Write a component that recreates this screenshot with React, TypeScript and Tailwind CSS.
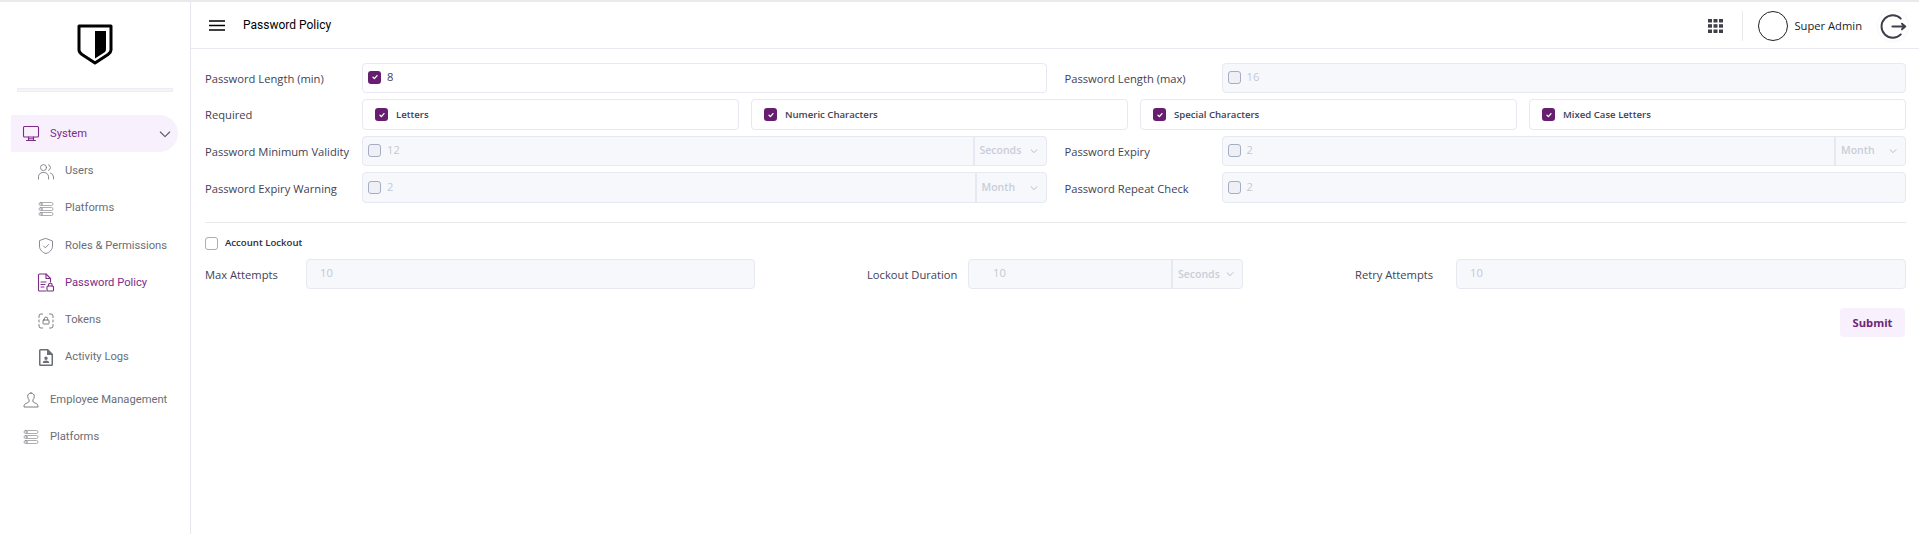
import type { ReactNode } from "react";

const stroke = {
  fill: "none",
  stroke: "currentColor",
  strokeLinecap: "round" as const,
  strokeLinejoin: "round" as const,
};

const MonitorIcon = () => (
  <svg width="20" height="20" viewBox="0 0 20 20" {...stroke} strokeWidth="1.1">
    <rect x="2.500" y="2.500" width="15" height="10.500" rx="1" />
    <path d="M7.500 13v3.500M12.500 13v3.500M5.500 16.500h9M7.500 14.800h5" />
  </svg>
);

const UsersIcon = () => (
  <svg width="18" height="18" viewBox="0 0 18 18" {...stroke} strokeWidth="0.8">
    <circle cx="6.500" cy="4.600" r="3" />
    <path d="M1.500 16v-2.200a4.300 4.300 0 0 1 4.300-4.300h1.400a4.300 4.300 0 0 1 4.300 4.300V16" />
    <path d="M11.500 1.800a3 3 0 0 1 0 5.600M13.500 10a4.200 4.200 0 0 1 3 4V16" />
  </svg>
);

const PlatformsIcon = () => (
  <svg width="16" height="16" viewBox="0 0 16 16" {...stroke} strokeWidth="0.7" className="opacity-80">
    <rect x="1" y="1.500" width="14" height="3" rx="1.500" />
    <rect x="1" y="6.500" width="14" height="3" rx="1.500" />
    <rect x="1" y="11.500" width="14" height="3" rx="1.500" />
    <circle cx="3.500" cy="3" r="0.800" />
    <circle cx="3.500" cy="8" r="0.800" />
    <circle cx="3.500" cy="13" r="0.800" />
  </svg>
);

const ShieldIcon = () => (
  <svg width="18" height="18" viewBox="0 0 18 18" {...stroke} strokeWidth="0.8">
    <path d="M9 1.500 15.500 4v5c0 3.800-2.800 6.400-6.500 7.500C5.300 15.400 2.500 12.800 2.500 9V4z" />
    <path d="m6.500 9 1.800 1.800 3.300-3.300" />
  </svg>
);

const PolicyIcon = () => (
  <svg width="18" height="20" viewBox="0 0 18 20" {...stroke} strokeWidth="1.1">
    <path d="M9 18H2.500a1 1 0 0 1-1-1V2a1 1 0 0 1 1-1h6.500l4.500 4.500V9" />
    <path d="M9 1v4.500h4.500M4 9h5M4 11.500h4M4 14h3" />
    <rect x="10" y="13" width="6.500" height="5" rx="1" />
    <path d="M11.500 13v-1a1.800 1.800 0 0 1 3.600 0v1" />
  </svg>
);

const TokenIcon = () => (
  <svg width="16" height="16" viewBox="0 0 16 16" {...stroke} strokeWidth="0.9">
    <path d="M1 4.500V3a2 2 0 0 1 2-2h1.500M11.500 1H13a2 2 0 0 1 2 2v1.500M15 11.500V13a2 2 0 0 1-2 2h-1.500M4.500 15H3a2 2 0 0 1-2-2v-1.500M1 7v2M15 7v2" />
    <rect x="5" y="7" width="6" height="4" rx="0.600" />
    <path d="M6.300 7V5.800a1.700 1.700 0 0 1 3.400 0V7" />
  </svg>
);

const LogsIcon = () => (
  <svg width="14" height="17" viewBox="0 0 14 17">
    <path
      fillRule="evenodd"
      fill="currentColor"
      d="M1.500 0H9l5 5v10.500a1.500 1.500 0 0 1-1.500 1.500h-11A1.500 1.500 0 0 1 0 15.500v-14A1.500 1.500 0 0 1 1.500 0ZM1.500 1.500v14h11V6H8V1.500ZM7 7.500a1.700 1.700 0 1 1 0 3.400 1.700 1.700 0 0 1 0-3.400ZM3.800 14c0-1.600 1.500-2.400 3.200-2.400s3.200.8 3.200 2.400Z"
    />
  </svg>
);

const PersonIcon = () => (
  <svg width="16" height="16" viewBox="0 0 16 16" {...stroke} strokeWidth="0.9">
    <path d="M8 1c-2 0-3.300 1.400-3.300 3.400 0 1.500.6 2.700 1.400 3.500v1.300c0 .7-.5 1-1.300 1.400L2.300 11.800C1.400 12.300 1 13.100 1 15h14c0-1.900-.4-2.700-1.300-3.200l-2.500-1.200c-.8-.4-1.300-.7-1.300-1.400V7.900c.8-.8 1.400-2 1.400-3.500C11.300 2.400 10 1 8 1Z" />
  </svg>
);

const Chevron = ({ className, width = "1.200" }: { className: string; width?: string }) => (
  <svg className={className} viewBox="0 0 12 12" {...stroke} strokeWidth={width}>
    <path d="m2.500 4.500 3.500 3.500 3.500-3.500" />
  </svg>
);

const Check = ({ checked, disabled }: { checked?: boolean; disabled?: boolean }) =>
  checked ? (
    <span className="flex h-[13px] w-[13px] shrink-0 items-center justify-center rounded-[3px] bg-[#651f6e]">
      <svg width="8" height="8" viewBox="0 0 8 8" {...stroke} stroke="#ffffff" strokeWidth="1.300">
        <path d="m2 4.200 1.400 1.400L6 2.600" />
      </svg>
    </span>
  ) : (
    <span
      className={`h-[13px] w-[13px] shrink-0 rounded-[3px] border border-[#a5adc0] ${disabled ? "bg-[#eef0f6]" : "bg-white"}`}
    />
  );

const Suffix = ({ label, wide }: { label: string; wide?: boolean }) => (
  <div
    className={`flex shrink-0 items-center justify-between border-l-2 border-[#e6e9f2] pl-[5px] pr-[7px] text-[10.500px] font-semibold text-[#c9cdd8] ${wide ? "w-[73px]" : "w-[71px]"}`}
  >
    <span>{label}</span>
    <Chevron className="h-[10px] w-[10px] text-[#b8bdc9]" />
  </div>
);

const Box = ({
  value,
  suffix,
  wide,
  className = "h-[30px]",
}: {
  value: string;
  suffix?: string;
  wide?: boolean;
  className?: string;
}) => (
  <div className={`flex items-stretch rounded-[4px] border border-[#e6e9f2] bg-[#f7f8fc] ${className}`}>
    <div className="flex min-w-0 flex-1 items-center gap-[6px] pb-px pl-[5px] text-[11.200px] text-[#c4c8d3]">
      <Check disabled />
      <span>{value}</span>
    </div>
    {suffix && <Suffix label={suffix} wide={wide} />}
  </div>
);

const Plain = ({ value, pad, suffix }: { value: string; pad: string; suffix?: boolean }) => (
  <div className="flex h-[30px] items-stretch rounded-[4px] border border-[#e6e9f2] bg-[#f7f8fc]">
    <div className={`flex flex-1 items-center pb-[2px] text-[11.200px] text-[#c4c8d3] ${pad}`}>{value}</div>
    {suffix && <Suffix label="Seconds" />}
  </div>
);

const Label = ({ children, className = "" }: { children: ReactNode; className?: string }) => (
  <label className={`text-[11.200px] leading-none text-[#3f4254] ${className}`}>{children}</label>
);

const Row = ({ label, children }: { label: string; children: ReactNode }) => (
  <div className="grid grid-cols-[157px_1fr] items-center">
    <Label className="pt-[2px]">{label}</Label>
    {children}
  </div>
);

const Required = ({ label }: { label: string }) => (
  <div className="flex h-[31px] items-center gap-[8px] rounded-[4px] border border-[#e6e9f2] bg-white pl-[12px] text-[9.600px] font-semibold text-[#3f4254]">
    <Check checked />
    <span className="pt-px">{label}</span>
  </div>
);

const NavItem = ({ icon, label, active, top }: { icon: ReactNode; label: string; active?: boolean; top?: boolean }) => (
  <div
    className={`flex h-[37.250px] items-center text-[11.200px] ${top ? "pl-[21px]" : "pl-[36px]"} ${active ? "text-[#7c2c86]" : "text-[#6b6e76]"}`}
  >
    <span className="flex w-[20px] justify-center">{icon}</span>
    <span className="ml-[9px]">{label}</span>
  </div>
);

export default function App() {
  return (
    <div className="flex h-[534px] w-full border-t-2 border-[#e9e9ee] bg-white font-['Open_Sans',sans-serif]">
      <aside className="flex w-[191px] shrink-0 flex-col border-r border-[#e6e6ef] font-['Roboto',sans-serif]">
        <div className="flex justify-center pt-[22px]">
          <svg width="36" height="42" viewBox="0 0 36 42">
            <path
              d="M2 2h32v24c0 2-1 3-3 4.500L18 39 5 30.500C3 29 2 28 2 26Z"
              fill="none"
              stroke="#000000"
              strokeWidth="3"
              strokeLinejoin="round"
            />
            <path d="M18 7h11v18c0 2-.8 3-2.500 4L18 34.500Z" fill="#000000" />
          </svg>
        </div>
        <div className="mx-[17px] mt-[22px] h-[4px] border border-[#eeedf4] bg-[#f4f3f8]" />
        <nav className="mt-[23px] flex flex-col">
          <div className="mb-px ml-[11px] flex h-[37px] w-[167px] items-center rounded-r-full bg-[#f8f0fc] pl-[10px] pr-[5px] text-[11.200px] text-[#7c2c86]">
            <span className="flex w-[20px] justify-center">
              <MonitorIcon />
            </span>
            <span className="ml-[9px] flex-1 pt-px">System</span>
            <Chevron className="h-[16px] w-[16px] text-[#555a66]" width="0.800" />
          </div>
          <NavItem icon={<UsersIcon />} label="Users" />
          <NavItem icon={<PlatformsIcon />} label="Platforms" />
          <NavItem icon={<ShieldIcon />} label="Roles & Permissions" />
          <NavItem icon={<PolicyIcon />} label="Password Policy" active />
          <NavItem icon={<TokenIcon />} label="Tokens" />
          <NavItem icon={<LogsIcon />} label="Activity Logs" />
          <div className="mt-[5px]">
            <NavItem icon={<PersonIcon />} label="Employee Management" top />
            <NavItem icon={<PlatformsIcon />} label="Platforms" top />
          </div>
        </nav>
      </aside>

      <div className="min-w-0 flex-1">
        <header className="flex h-[47px] items-center border-b border-[#e9e9f1] pl-[18px] pr-[11px]">
          <svg width="16" height="11" viewBox="0 0 16 11" stroke="#000000" strokeWidth="1.700">
            <path d="M0 1h16M0 5.500h16M0 10h16" />
          </svg>
          <span className="ml-[18px] font-['Roboto',sans-serif] text-[12px] text-black">Password Policy</span>
          <div className="ml-auto flex items-center pt-[2px]">
            <svg width="15" height="14" viewBox="0 0 15 14" fill="#3f3f4a">
              <rect x="0" y="0" width="4" height="3.500" />
              <rect x="5.500" y="0" width="4" height="3.500" />
              <rect x="11" y="0" width="4" height="3.500" />
              <rect x="0" y="5.200" width="4" height="3.500" />
              <rect x="5.500" y="5.200" width="4" height="3.500" />
              <rect x="11" y="5.200" width="4" height="3.500" />
              <rect x="0" y="10.500" width="4" height="3.500" />
              <rect x="5.500" y="10.500" width="4" height="3.500" />
              <rect x="11" y="10.500" width="4" height="3.500" />
            </svg>
            <span className="ml-[19px] h-[30px] w-px bg-[#e9e9ee]" />
            <span className="ml-[15px] h-[30px] w-[30px] rounded-full border border-[#222222]" />
            <span className="ml-[6px] text-[11.200px] text-[#1b1b28]">Super Admin</span>
            <span className="ml-[16px] flex h-[30px] w-[30px] items-center justify-center rounded-full bg-white shadow-[0_0_3px_rgba(0,0,0,0.08)]">
              <svg width="27" height="27" viewBox="0 0 24 24" {...stroke} stroke="#3f3f4a" strokeWidth="1.700">
                <path d="M18.500 5A10 10 0 1 0 18.500 19" />
                <path d="M11 12h11.500M19.500 9.500l3 2.500-3 2.500" />
              </svg>
            </span>
          </div>
        </header>

        <main className="pl-[14px] pr-[13px] pt-[14px]">
          <div className="flex flex-col gap-y-[6px]">
            <div className="grid grid-cols-2 gap-x-[18px]">
              <Row label="Password Length (min)">
                <div className="flex h-[30px] items-center gap-[6px] rounded-[4px] border border-[#e6e9f2] bg-white pb-[2px] pl-[5px] text-[11.200px] text-[#3f4254]">
                  <Check checked />
                  <span>8</span>
                </div>
              </Row>
              <Row label="Password Length (max)">
                <Box value="16" />
              </Row>
            </div>
            <div className="grid grid-cols-[157px_1fr] items-center">
              <Label>Required</Label>
              <div className="grid grid-cols-4 gap-x-[12px]">
                <Required label="Letters" />
                <Required label="Numeric Characters" />
                <Required label="Special Characters" />
                <Required label="Mixed Case Letters" />
              </div>
            </div>
            <div className="grid grid-cols-2 gap-x-[18px]">
              <Row label="Password Minimum Validity">
                <Box value="12" suffix="Seconds" wide />
              </Row>
              <Row label="Password Expiry">
                <Box value="2" suffix="Month" />
              </Row>
            </div>
            <div className="grid grid-cols-2 gap-x-[18px]">
              <Row label="Password Expiry Warning">
                <Box value="2" suffix="Month" className="h-[31px]" />
              </Row>
              <Row label="Password Repeat Check">
                <Box value="2" className="h-[31px]" />
              </Row>
            </div>
          </div>

          <div className="mt-[19px] border-t border-[#e9e9ee]" />

          <div className="mt-[13px] flex items-center gap-[7px] text-[9.600px] font-semibold text-[#2b2d3a]">
            <Check />
            Account Lockout
          </div>

          <div className="mt-[9px] grid grid-cols-[550px_376px_1fr] gap-x-[112px]">
            <div className="grid grid-cols-[101px_1fr] items-center">
              <Label>Max Attempts</Label>
              <Plain value="10" pad="pl-[13px]" />
            </div>
            <div className="grid grid-cols-[101px_1fr] items-center">
              <Label>Lockout Duration</Label>
              <Plain value="10" pad="pl-[24px]" suffix />
            </div>
            <div className="grid grid-cols-[101px_1fr] items-center">
              <Label>Retry Attempts</Label>
              <Plain value="10" pad="pl-[13px]" />
            </div>
          </div>

          <div className="mt-[19px] flex justify-end pr-px">
            <button className="h-[29px] w-[65px] rounded-[4px] bg-[#f8f0fc] pt-px text-[11.200px] font-bold text-[#6f2479]">
              Submit
            </button>
          </div>
        </main>
      </div>
    </div>
  );
}
